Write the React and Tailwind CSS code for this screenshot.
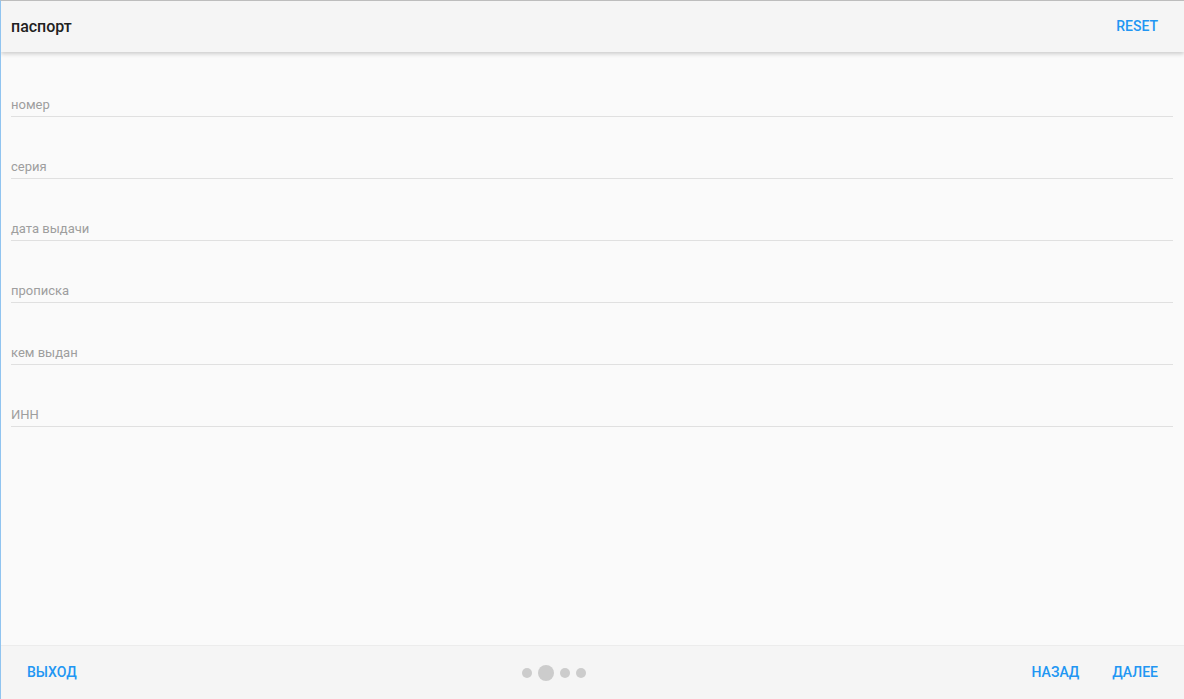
import React from 'react';

const fields = ['номер', 'серия', 'дата выдачи', 'прописка', 'кем выдан', 'ИНН'];

const App = () => {
  return (
    <div className="h-[699px] w-full flex flex-col bg-[#fafafa] border-l border-t border-l-[#90c4f0] border-t-[#bdbdbd] overflow-hidden" style={{ fontFamily: 'Roboto, "Noto Sans", sans-serif' }}>
      {/* Header */}
      <div className="h-[51px] shrink-0 bg-[#f5f5f5] flex items-center justify-between pl-[10px] pr-[26px] shadow-[0_2px_4px_rgba(0,0,0,0.18)] relative z-10">
        <h1 className="text-[16px] font-medium text-[#212121]">паспорт</h1>
        <button className="text-[14px] font-medium text-[#2196f3]">RESET</button>
      </div>

      {/* Form */}
      <div className="flex-1 pl-[10px] pr-[11px] pt-[3px]">
        {fields.map((f) => (
          <div key={f} className="h-[62px] flex flex-col justify-end pb-[3px] border-b border-[#e0e0e0]">
            <span className="text-[13px] leading-[16px] text-[#9e9e9e]">{f}</span>
          </div>
        ))}
      </div>

      {/* Footer */}
      <div className="h-[54px] shrink-0 bg-[#f5f5f5] border-t border-[#ececec] flex items-center justify-between pl-[26px] pr-[26px]">
        <button className="text-[14px] font-medium text-[#2196f3]">ВЫХОД</button>
        <div className="flex items-center gap-[6px]">
          <span className="w-[10px] h-[10px] rounded-full bg-[#cccccc]"></span>
          <span className="w-[16px] h-[16px] rounded-full bg-[#cccccc]"></span>
          <span className="w-[10px] h-[10px] rounded-full bg-[#cccccc]"></span>
          <span className="w-[10px] h-[10px] rounded-full bg-[#cccccc]"></span>
        </div>
        <div className="flex items-center gap-[33px]">
          <button className="text-[14px] font-medium text-[#2196f3]">НАЗАД</button>
          <button className="text-[14px] font-medium text-[#2196f3]">ДАЛЕЕ</button>
        </div>
      </div>
    </div>
  );
};

export default App;
